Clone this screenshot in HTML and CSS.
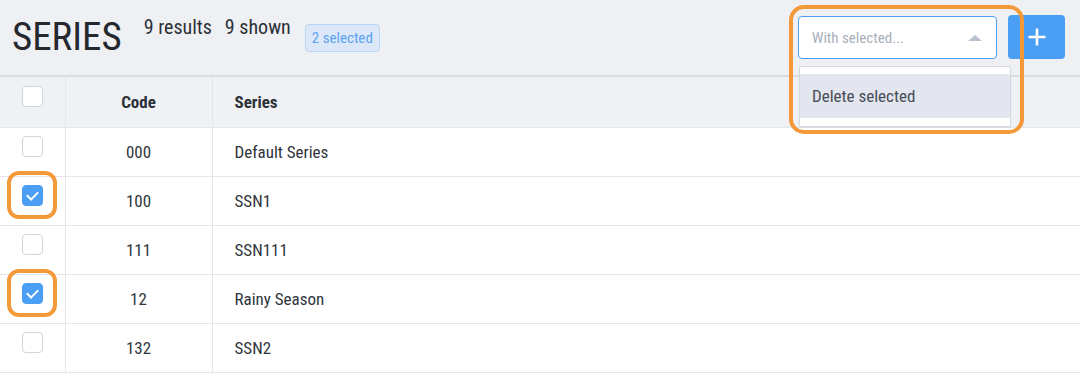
FILE: index.html
```html
<!DOCTYPE html>
<html lang="en">
<head>
<meta charset="utf-8">
<title>Series</title>
<link rel="stylesheet" href="styles.css">
</head>
<body>
<div class="page">
  <header class="topbar">
    <h1 class="title">SERIES</h1>
    <div class="counts"><span>9 results</span><span>9 shown</span></div>
    <span class="badge">2 selected</span>
    <div class="actions">
      <div class="select-wrap">
        <div class="select">
          <span class="placeholder">With selected...</span>
          <span class="caret"></span>
        </div>
        <div class="menu">
          <div class="menu-item">Delete selected</div>
        </div>
        <span class="highlight hl-menu"></span>
      </div>
      <button class="add" type="button" aria-label="Add">
        <svg width="20" height="20" viewBox="0 0 20 20"><path d="M10 1.5v17M1.5 10h17" stroke="#fff" stroke-width="2.6" fill="none"/></svg>
      </button>
    </div>
  </header>
  <table class="grid">
    <thead>
      <tr>
        <th class="c-check"><span class="cb"></span></th>
        <th class="c-code">Code</th>
        <th class="c-name">Series</th>
      </tr>
    </thead>
    <tbody>
      <tr><td class="c-check"><span class="cb"></span></td><td class="c-code">000</td><td class="c-name">Default Series</td></tr>
      <tr><td class="c-check"><span class="cb checked"></span><span class="highlight hl-cb"></span></td><td class="c-code">100</td><td class="c-name">SSN1</td></tr>
      <tr><td class="c-check"><span class="cb"></span></td><td class="c-code">111</td><td class="c-name">SSN111</td></tr>
      <tr><td class="c-check"><span class="cb checked"></span><span class="highlight hl-cb"></span></td><td class="c-code">12</td><td class="c-name">Rainy Season</td></tr>
      <tr><td class="c-check"><span class="cb"></span></td><td class="c-code">132</td><td class="c-name">SSN2</td></tr>
    </tbody>
  </table>
</div>
</body>
</html>
```
FILE: styles.css
```css
* { box-sizing: border-box; }
html, body { margin: 0; padding: 0; }
body {
  background: #ffffff;
  font-family: Roboto, "Noto Sans", "Liberation Sans", sans-serif;
  font-stretch: condensed;
  color: #2f343b;
  width: 1080px;
  overflow: hidden;
}
.page { width: 1080px; }

.topbar {
  display: flex;
  align-items: flex-start;
  height: 77px;
  background: #eff0f4;
  border-bottom: 2px solid #d9dce1;
  padding: 0 15px 0 12px;
}
.title {
  margin: 18px 0 0 0;
  font-size: 39px;
  line-height: 38px;
  font-weight: 400;
  color: #25292f;
}
.counts {
  display: flex;
  gap: 13px;
  margin: 14px 0 0 22px;
  font-size: 20px;
  line-height: 26px;
  color: #2c3037;
}
.badge {
  margin: 24px 0 0 14px;
  height: 28px;
  padding: 0 6px;
  display: inline-flex;
  align-items: center;
  background: #dce8f8;
  border: 1px solid #bcd6f5;
  border-radius: 4px;
  color: #5aa3f1;
  font-size: 15px;
}
.actions {
  margin-left: auto;
  display: flex;
  gap: 11px;
  padding-top: 15px;
}
.select-wrap { position: relative; margin-top: 1px; }
.select {
  width: 199px;
  height: 43px;
  border: 1px solid #4a9ff5;
  border-radius: 4px;
  background: #fff;
  display: flex;
  align-items: center;
  justify-content: space-between;
  padding: 0 14px 0 13px;
}
.placeholder {
  color: #a8afba;
  font-size: 15px;
}
.caret {
  width: 0; height: 0;
  border-left: 7px solid transparent;
  border-right: 7px solid transparent;
  border-bottom: 6px solid #b9c1cc;
}
.menu {
  position: absolute;
  left: 1px;
  top: 50px;
  width: 212px;
  background: #fff;
  border: 1px solid #d3d8df;
  border-radius: 2px;
  padding: 7px 0 8px;
  box-shadow: 0 1px 2px rgba(0,0,0,0.06);
  z-index: 2;
}
.menu-item {
  background: #e3e6ee;
  height: 44px;
  line-height: 44px;
  padding-left: 12px;
  font-size: 17px;
  color: #474d58;
}
.add {
  width: 57px;
  height: 44px;
  border: none;
  border-radius: 4px;
  background: #4a9ff5;
  display: flex;
  align-items: center;
  justify-content: center;
  padding: 0;
}

.highlight {
  position: absolute;
  border: 4px solid #f3993a;
  pointer-events: none;
  z-index: 3;
}
.hl-menu {
  left: -9px;
  top: -11px;
  width: 235px;
  height: 129px;
  border-radius: 15px;
}
.hl-cb {
  left: 7px;
  top: -6px;
  width: 50px;
  height: 48px;
  border-radius: 12px;
}

.grid {
  width: 100%;
  border-collapse: collapse;
  table-layout: fixed;
}
.grid th, .grid td {
  border-bottom: 1px solid #e3e6eb;
  font-size: 17px;
  padding: 0;
}
.grid th {
  background: #eff1f5;
  height: 50px;
  font-weight: 700;
  color: #2c3138;
}
.grid td { height: 49px; color: #30353c; }
.c-check { width: 65px; border-right: 1px solid #e3e6eb; position: relative; vertical-align: top; }
.c-code { width: 147px; text-align: center; border-right: 1px solid #e3e6eb; }
.c-name { text-align: left; padding-left: 22px !important; }
.grid th.c-check { padding-top: 9px; }
.grid td.c-check { padding-top: 8px; }
.cb {
  display: block;
  margin-left: 22px;
  width: 21px;
  height: 21px;
  border: 1px solid #cfd5de;
  border-radius: 4px;
  background: #fff;
}
.cb.checked {
  background: #4a9ff5;
  border-color: #4a9ff5;
  position: relative;
}
.cb.checked::after {
  content: "";
  position: absolute;
  left: 6px;
  top: 3px;
  width: 5px;
  height: 9px;
  border-right: 2px solid #fff;
  border-bottom: 2px solid #fff;
  transform: rotate(45deg);
}
```
